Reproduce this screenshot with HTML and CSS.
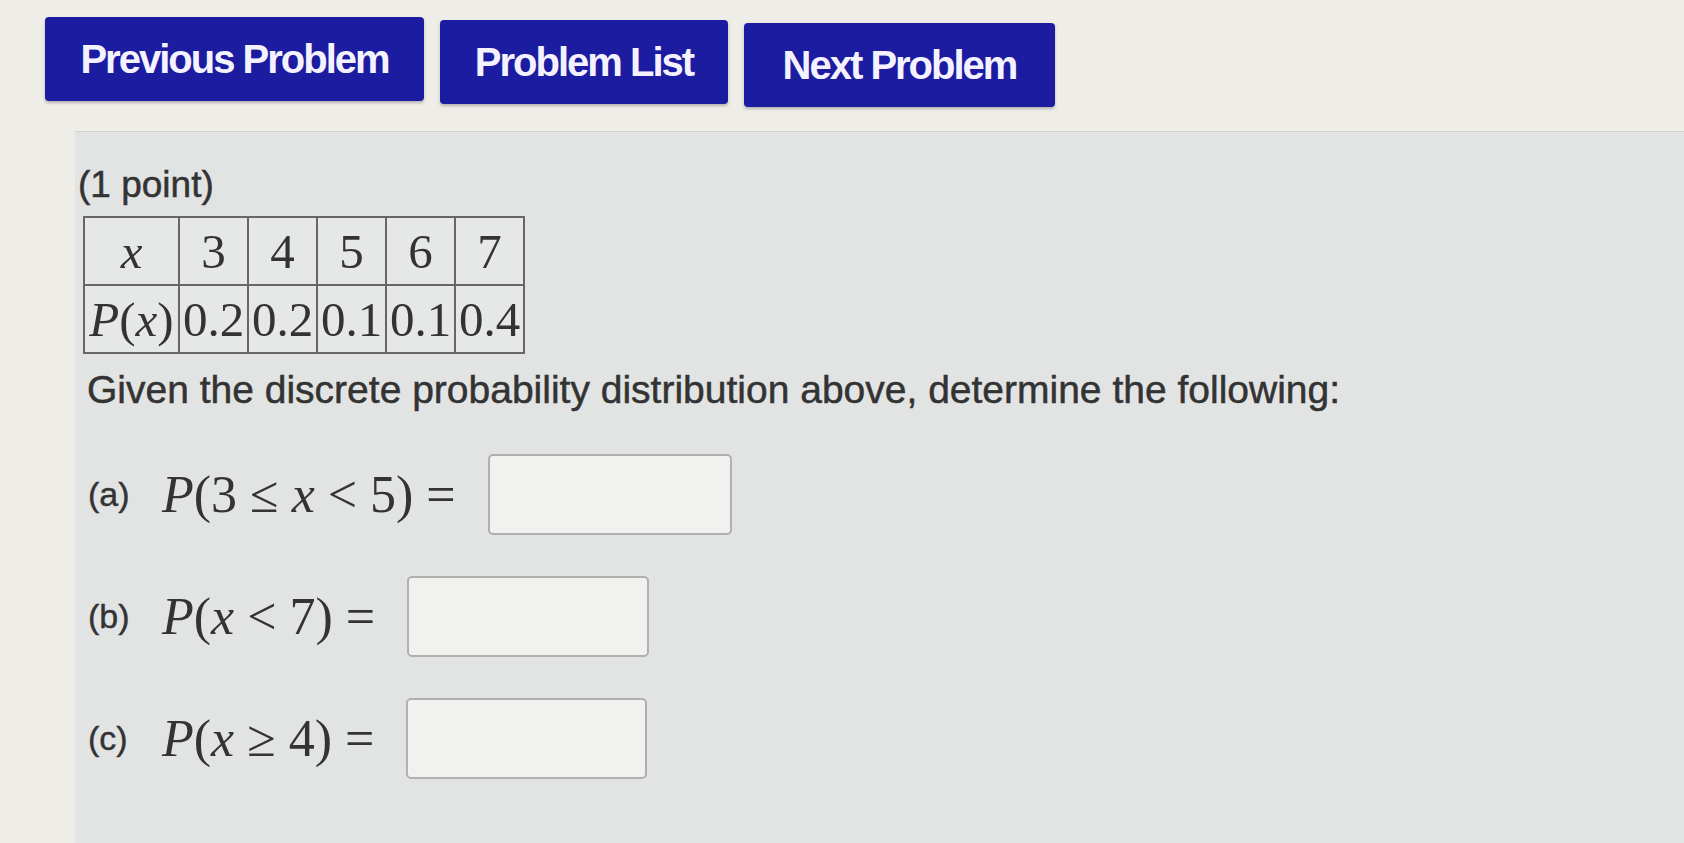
FILE: index.html
```html
<!DOCTYPE html>
<html>
<head>
<meta charset="utf-8">
<link rel="stylesheet" href="styles.css">
</head>
<body>
<div class="nav">
  <a class="btn btn-prev">Previous Problem</a>
  <a class="btn btn-list">Problem List</a>
  <a class="btn btn-next">Next Problem</a>
</div>
<div class="panel">
  <div class="points">(1 point)</div>
  <table class="dist">
    <tr><td class="h"><i>x</i></td><td>3</td><td>4</td><td>5</td><td>6</td><td>7</td></tr>
    <tr><td class="h"><i>P</i>(<i>x</i>)</td><td>0.2</td><td>0.2</td><td>0.1</td><td>0.1</td><td>0.4</td></tr>
  </table>
  <div class="given">Given the discrete probability distribution above, determine the following:</div>
  <div class="q q-a"><span class="lbl">(a)</span><span class="math"><i>P</i>(3 ≤ <i>x</i> &lt; 5) =</span><span class="box box-a"></span></div>
  <div class="q q-b"><span class="lbl">(b)</span><span class="math"><i>P</i>(<i>x</i> &lt; 7) =</span><span class="box box-b"></span></div>
  <div class="q q-c"><span class="lbl">(c)</span><span class="math"><i>P</i>(<i>x</i> ≥ 4) =</span><span class="box box-c"></span></div>
</div>
</body>
</html>
```
FILE: styles.css
```css
html, body {
  margin: 0;
  padding: 0;
  height: 100%;
  overflow: hidden;
}
body {
  background: #efede8;
  font-family: "Liberation Sans", Arial, sans-serif;
  color: #333;
}
.nav {
  display: flex;
  align-items: flex-start;
  gap: 16px;
  padding: 17px 0 0 45px;
  height: 114px;
  box-sizing: border-box;
}
.btn {
  display: flex;
  align-items: center;
  justify-content: center;
  background: #1c1ca0;
  color: #f4f2ff;
  font-size: 40px;
  font-weight: bold;
  letter-spacing: -2px;
  height: 84px;
  border-radius: 4px;
  box-shadow: 0 2px 3px rgba(0,0,0,0.25);
}
.btn-prev { width: 379px; }
.btn-list { width: 288px; margin-top: 3px; }
.btn-next { width: 311px; margin-top: 6px; }

.panel {
  margin: 17px 0 0 75px;
  height: 720px;
  background: #e2e4e4;
  border-top: 1px solid #d0d2d2;
  padding: 31px 0 0 3px;
  box-sizing: border-box;
}
.points {
  font-size: 37px;
  line-height: 44px;
  -webkit-text-stroke: 0.5px #333;
}
.dist {
  border-collapse: collapse;
  margin: 9px 0 0 5px;
  font-family: "Liberation Serif", "Times New Roman", serif;
  font-size: 49px;
  color: #333;
}
.dist td {
  border: 2px solid #666;
  height: 66px;
  padding: 0;
  text-align: center;
  background: #e6e8e8;
  width: 67px;
  line-height: 1;
}
.dist td.h { width: 93px; }
.given {
  font-size: 39px;
  line-height: 46px;
  margin: 13px 0 0 9px;
  color: #333;
  -webkit-text-stroke: 0.5px #333;
}
.q {
  display: flex;
  align-items: center;
  margin-left: 10px;
}
.q-a { margin-top: 41px; }
.q-b { margin-top: 41px; }
.q-c { margin-top: 41px; }
.lbl {
  font-size: 34px;
  width: 74px;
  -webkit-text-stroke: 0.4px #333;
}
.math {
  font-family: "Liberation Serif", "Times New Roman", serif;
  font-size: 52px;
  color: #333;
  margin-right: 32px;
}
.box {
  display: block;
  height: 81px;
  background: #f1f1ef;
  border: 2px solid #b0b0ae;
  border-radius: 5px;
  box-sizing: border-box;
}
.box-a { width: 244px; }
.box-b { width: 242px; }
.box-c { width: 241px; }
```
